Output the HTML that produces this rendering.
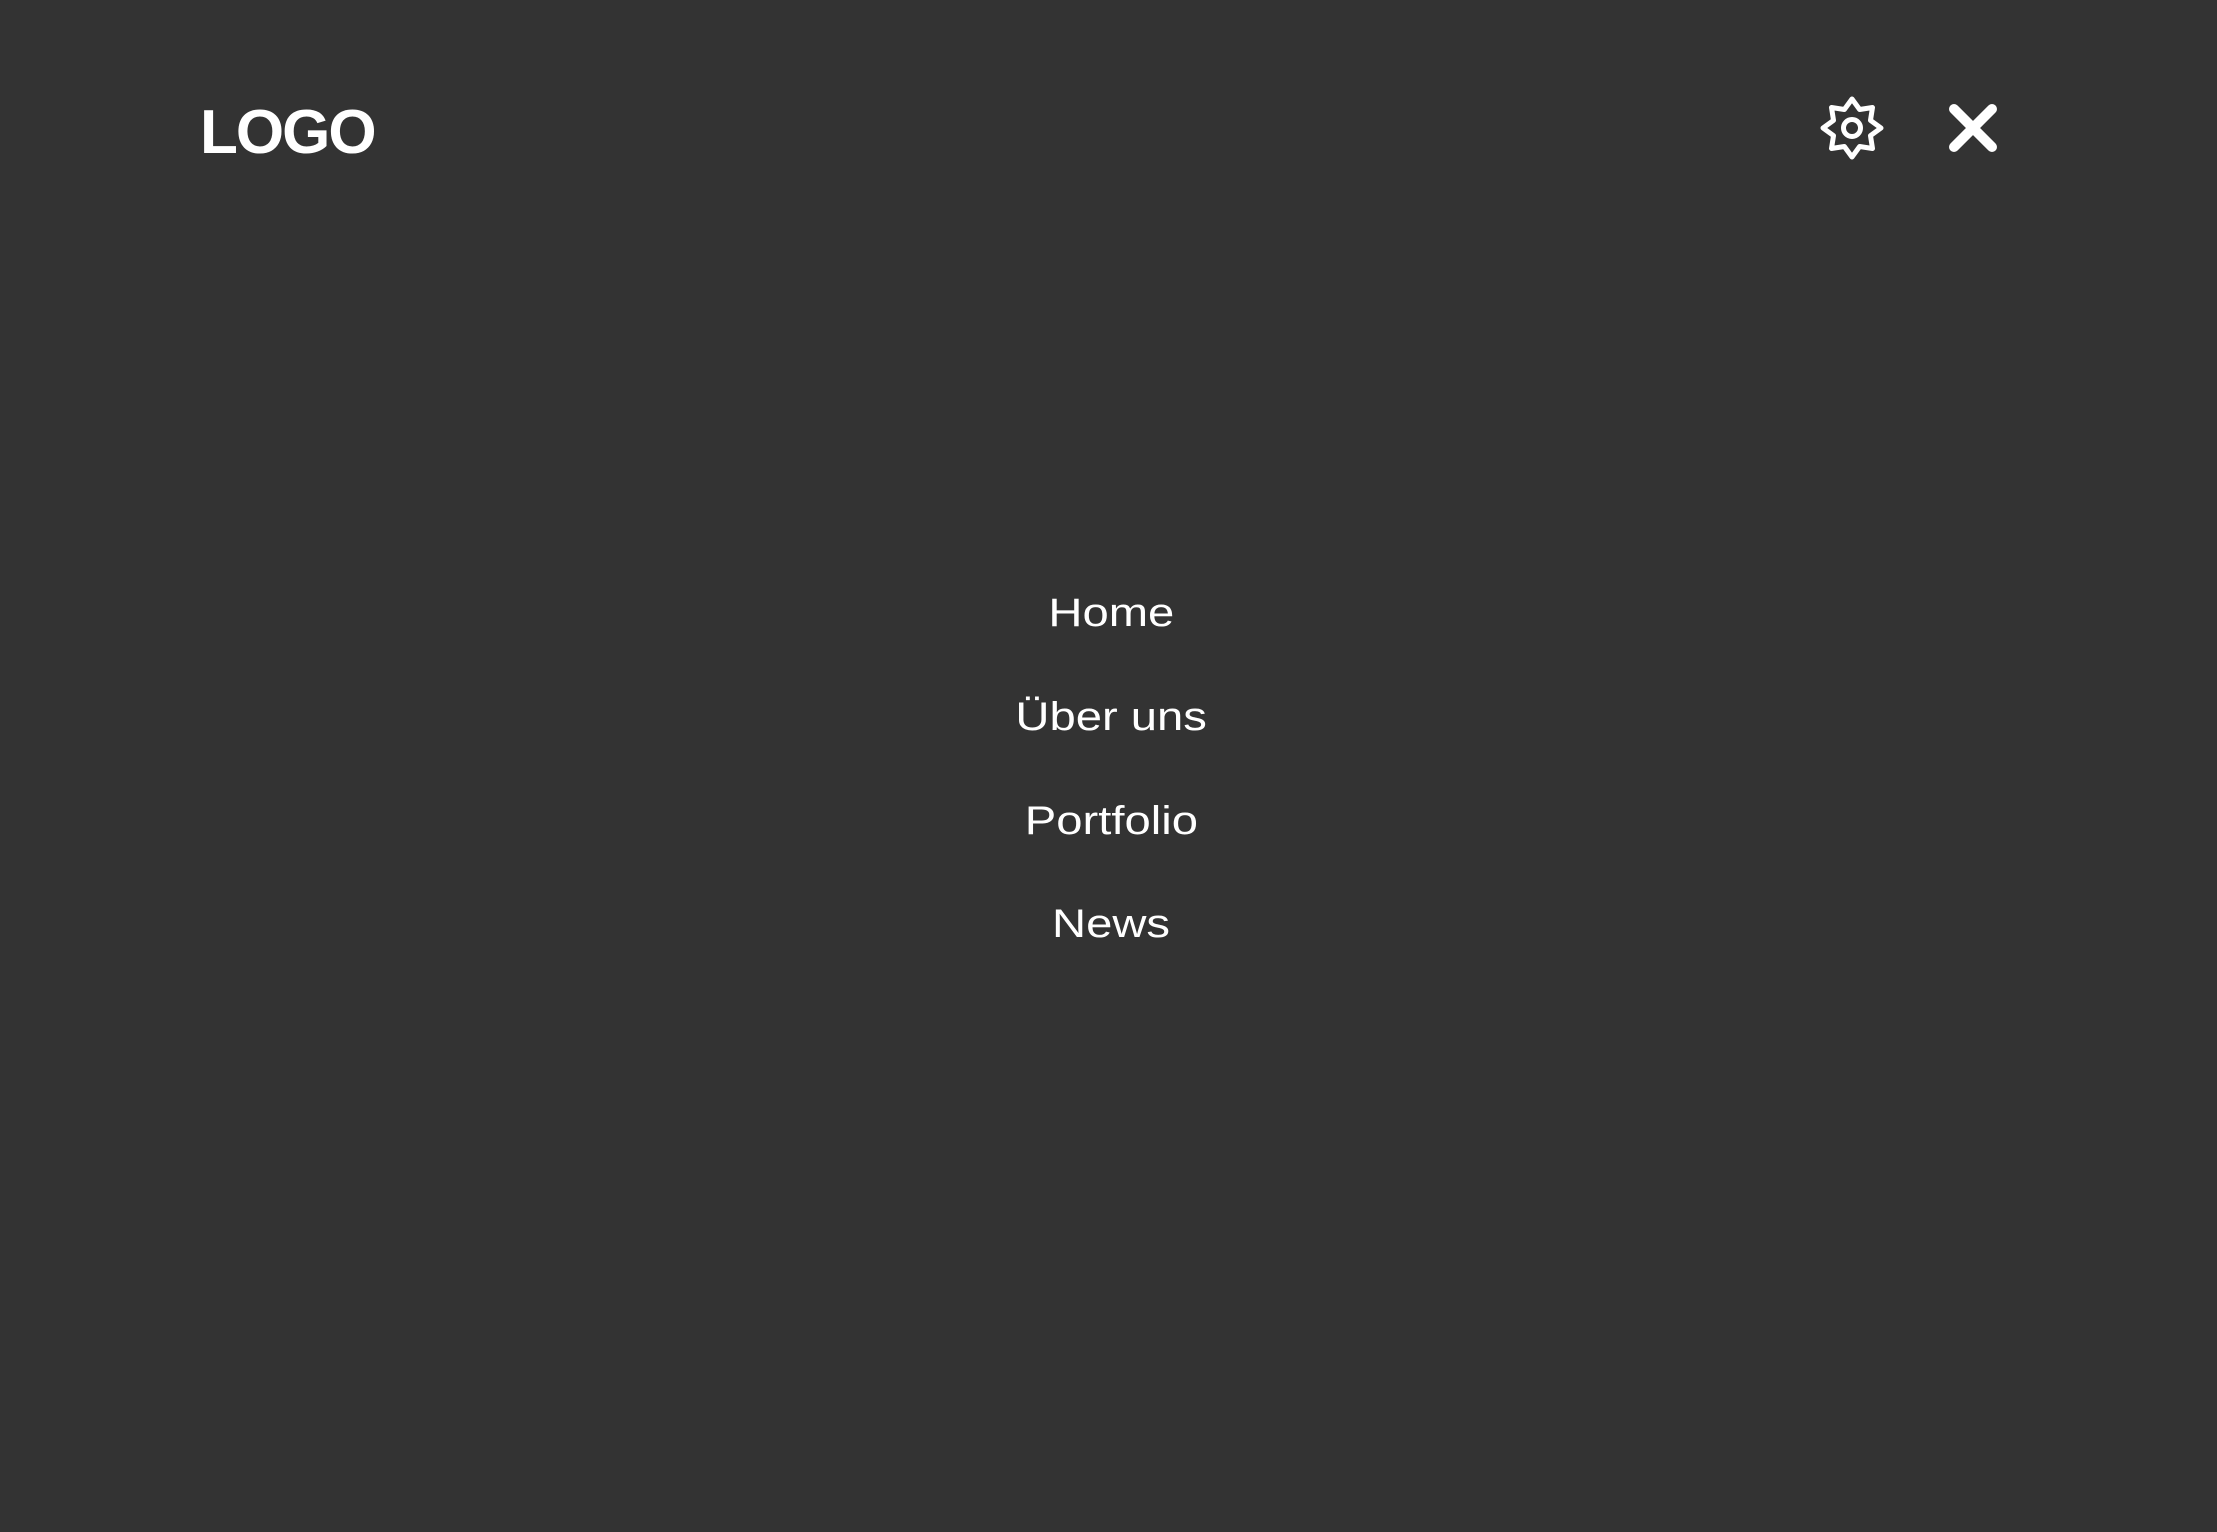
<!DOCTYPE html>
<html><head><meta charset="utf-8"><style>
html,body{margin:0;padding:0;}
body{width:2217px;height:1532px;background:#333333;position:relative;overflow:hidden;font-family:"Liberation Sans",sans-serif;color:#fff;}
.logo{position:absolute;left:200px;top:98px;font-weight:bold;font-size:62px;line-height:70px;letter-spacing:-2px;}
.menu div{position:absolute;left:0;width:2222px;text-align:center;font-size:40px;line-height:48px;}
.menu span{display:inline-block;transform:scaleX(1.18);color:#fff;}
</style></head><body>
<div class="logo">LOGO</div>
<svg style="position:absolute;left:1812px;top:88px" width="80" height="80" viewBox="-40 -40 80 80">
<polygon fill="none" stroke="#fff" stroke-width="5" stroke-linejoin="round" points="0,-29 7.65,-18.48 20.5,-20.5 18.48,-7.65 29,0 18.48,7.65 20.5,20.5 7.65,18.48 0,29 -7.65,18.48 -20.5,20.5 -18.48,7.65 -29,0 -18.48,-7.65 -20.5,-20.5 -7.65,-18.48"/>
<circle cx="0" cy="0" r="8.5" fill="none" stroke="#fff" stroke-width="5"/>
</svg>
<svg style="position:absolute;left:1943px;top:98px" width="60" height="60" viewBox="0 0 60 60">
<path d="M11 11 L49 49 M49 11 L11 49" stroke="#fff" stroke-width="10" stroke-linecap="round"/>
</svg>
<div class="menu">
<div style="top:589px"><span>Home</span></div>
<div style="top:693px"><span>Über uns</span></div>
<div style="top:797px"><span>Portfolio</span></div>
<div style="top:900px"><span>News</span></div>
</div>
</body></html>
